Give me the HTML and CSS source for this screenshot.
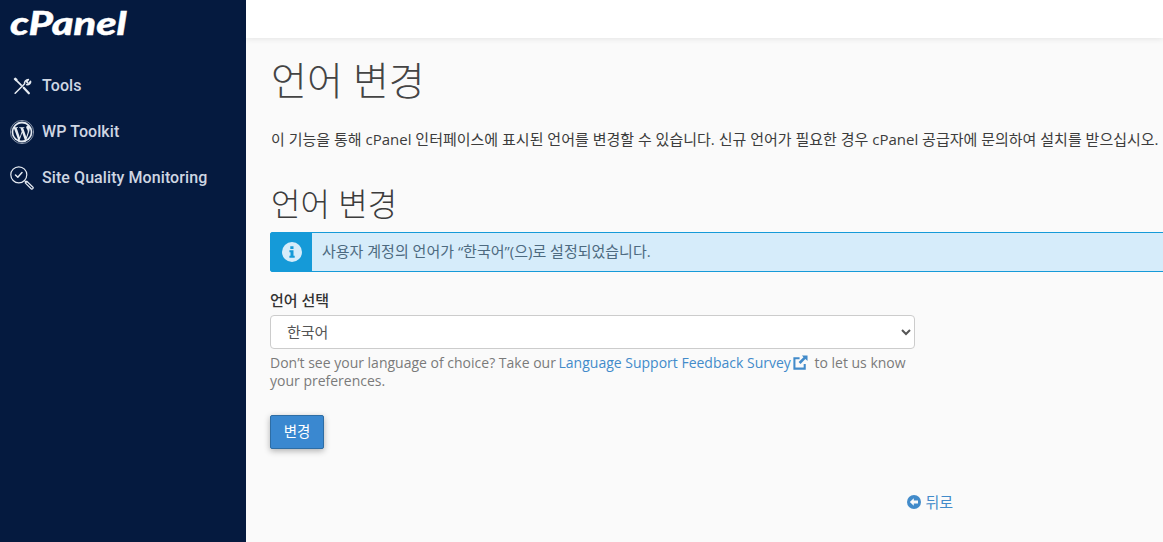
FILE: index.html
```html
<!DOCTYPE html>
<html lang="ko">
<head>
<meta charset="utf-8">
<title>언어 변경</title>
<link rel="stylesheet" href="styles.css">
</head>
<body>
<div class="app">
  <aside class="sidebar">
    <div class="logo"><span class="logo-text">cPanel</span></div>
    <nav class="nav">
      <a class="nav-item">
        <svg class="nav-icon" viewBox="-2 -2 28 28" fill="none" stroke="#e6ebf2" stroke-width="1.700" stroke-linecap="round" stroke-linejoin="round"><path d="M4.500 4.500 L11 11" stroke-width="2"/><path d="M3.200 3.800 L4.200 3 L6 4.500 L5 5.500 Z"/><path d="M14 14 L20 20.500" stroke-width="2.600"/><path d="M4 20.500 L14.500 10 M15 9.500 C14.500 7.500 16.500 4.500 19.500 4.500 L17.500 7 L18.500 8.500 L20.500 8.800 L22 6.500 C22.500 9 20 11 17.500 10.500" stroke-width="1.800"/></svg>
        <span>Tools</span>
      </a>
      <a class="nav-item">
        <svg class="nav-icon" viewBox="0 0 24 24"><circle cx="12" cy="12" r="11.600" fill="none" stroke="#aab4c4" stroke-width="0.800"/><circle cx="12" cy="12" r="10.400" fill="#e6ebf2"/><path fill="#051a3f" d="M3.300 12 C3.300 15.400 5.300 18.400 8.200 19.800 L4 8.400 C3.500 9.500 3.300 10.700 3.300 12 Z M17.800 11.600 C17.800 10.500 17.400 9.800 17.100 9.200 C16.600 8.500 16.200 7.900 16.200 7.200 C16.200 6.400 16.800 5.700 17.600 5.700 L17.800 5.700 C16.200 4.300 14.200 3.400 12 3.400 C9 3.400 6.300 4.900 4.800 7.300 L5.300 7.300 C6.200 7.300 7.600 7.200 7.600 7.200 C8.100 7.200 8.100 7.900 7.700 7.900 C7.700 7.900 7.200 8 6.700 8 L9.800 17.200 L11.700 11.600 L10.400 8 C9.900 8 9.500 7.900 9.500 7.900 C9 7.900 9.100 7.200 9.500 7.200 C9.500 7.200 10.900 7.300 11.800 7.300 C12.700 7.300 14.100 7.200 14.100 7.200 C14.600 7.200 14.600 7.900 14.200 7.900 C14.200 7.900 13.700 8 13.200 8 L16.300 17.100 L17.100 14.300 C17.500 13.200 17.800 12.300 17.800 11.600 Z M12.200 12.800 L9.600 20.300 C10.400 20.500 11.200 20.600 12 20.600 C13 20.600 14 20.400 14.900 20.100 L14.800 20 Z M19.600 7.900 C19.700 8.200 19.700 8.500 19.700 8.800 C19.700 9.700 19.500 10.700 19.100 11.900 L16.500 19.400 C19 17.900 20.700 15.200 20.700 12 C20.700 10.500 20.300 9.100 19.600 7.900 Z"/></svg>
        <span>WP Toolkit</span>
      </a>
      <a class="nav-item">
        <svg class="nav-icon" viewBox="0 0 24 24" fill="none" stroke="#e6ebf2" stroke-width="1.200" stroke-linecap="round" stroke-linejoin="round"><circle cx="8.800" cy="8.800" r="8"/><path d="M5.500 9 L7.800 11.200 L12 6.600" stroke-width="1.500"/><path d="M14.800 14.800 L16.200 16.200"/><path d="M16.800 15.200 L23 21.300 C23.700 22 22.300 23.700 21.400 23 L15.200 16.800 Z"/></svg>
        <span>Site Quality Monitoring</span>
      </a>
    </nav>
  </aside>
  <div class="main">
    <header class="topbar"></header>
    <main class="content">
      <h1 class="page-title">언어 변경</h1>
      <p class="intro">이 기능을 통해 cPanel 인터페이스에 표시된 언어를 변경할 수 있습니다. 신규 언어가 필요한 경우 cPanel 공급자에 문의하여 설치를 받으십시오.</p>
      <h2 class="section-title">언어 변경</h2>
      <div class="alert">
        <div class="alert-icon">
          <svg viewBox="0 0 20 20" width="20" height="20"><circle cx="10" cy="10" r="10" fill="#d6ecfa"/><path fill="#159ad8" d="M8.300 4.300h3.200v2.800H8.300z M7.400 8.300h4.100v5.400h1.200v2H7.400v-2h1.100v-3.400H7.400z"/></svg>
        </div>
        <div class="alert-body">사용자 계정의 언어가 “한국어”(으)로 설정되었습니다.</div>
      </div>
      <form class="form">
        <label class="label" for="lang">언어 선택</label>
        <select class="select" id="lang">
          <option>한국어</option>
        </select>
        <p class="help">Don’t see your language of choice? Take our <a class="link">Language Support Feedback Survey<svg class="ext" viewBox="0 0 16 16" width="15" height="15"><path fill="none" stroke="#428bca" stroke-width="2.200" d="M12.500 9.500V14.500H1.500V3.500h5.500"/><path fill="#428bca" d="M9.500 0.500H15.500V6.500L13.200 4.300 8 9.500 6 7.500 11.200 2.300Z"/></svg></a> to let us know your preferences.</p>
        <button class="btn" type="button">변경</button>
      </form>
      <div class="back-row">
        <a class="back">
          <svg viewBox="0 0 14 14" width="14" height="14"><circle cx="7" cy="7" r="7" fill="#428bca"/><path fill="#fafafa" d="M2.800 7 L6.800 3.200 V5.500 H11 V8.500 H6.800 V10.800 Z"/></svg>
          <span>뒤로</span>
        </a>
      </div>
    </main>
  </div>
</div>
</body>
</html>
```
FILE: styles.css
```css
* { box-sizing: border-box; }
html, body { margin: 0; height: 100%; overflow: hidden; }
body {
  font-family: "Open Sans", "Noto Sans CJK KR", sans-serif;
  font-size: 14px;
  line-height: 20px;
  color: #333;
  background: #fafafa;
}
.app { display: flex; width: 1163px; height: 542px; overflow: hidden; }
.sidebar {
  flex: 0 0 246px;
  background: #051a3f;
  color: #e6ebf2;
}
.logo {
  height: 63px;
  padding-left: 10px;
  font-family: "Lato", sans-serif;
  font-weight: 900;
  font-style: italic;
  font-size: 33px;
  line-height: 44px;
  color: #fff;
}
.logo-text {
  display: inline-block;
  transform-origin: 0 50%;
  transform: scaleX(1.26);
  -webkit-text-stroke: 0.4px #fff;
}
.nav { display: flex; flex-direction: column; }
.nav-item {
  display: flex;
  align-items: center;
  height: 46px;
  padding-left: 10px;
  gap: 8px;
  font-family: "Roboto", sans-serif;
  font-size: 16px;
  font-weight: 500;
  letter-spacing: 0.08px;
  color: #cfd6e2;
}
.nav-icon { width: 24px; height: 24px; flex: none; }
.main { flex: 1; min-width: 0; display: flex; flex-direction: column; }
.topbar {
  height: 38px;
  background: #fff;
  box-shadow: 0 1px 6px rgba(0,0,0,.09);
  flex: none;
}
.content { padding: 0 0 0 25px; flex: 1; }
.page-title {
  margin: 20px 0 0;
  font-size: 39px;
  line-height: 44px;
  font-weight: 300;
  color: #444;
  white-space: nowrap;
}
.intro {
  margin: 27px 0 0;
  white-space: nowrap;
  font-size: 15px;
  line-height: 20px;
  color: #3c3c3c;
}
.section-title {
  margin: 36px 0 0;
  font-size: 32px;
  line-height: 38px;
  font-weight: 300;
  color: #3c3c3c;
  white-space: nowrap;
}
.alert {
  display: flex;
  height: 40px;
  margin: 9px 0 0 -1px;
  width: 900px;
  border: 1px solid #159ad8;
  border-radius: 2px 0 0 2px;
  background: #d6ecfa;
}
.alert-icon {
  flex: 0 0 41px;
  background: #159ad8;
  display: flex;
  align-items: center;
  justify-content: center;
}
.alert-body {
  padding-left: 10px;
  font-size: 15px;
  line-height: 37px;
  color: #4d6a80;
  white-space: nowrap;
}
.form { width: 645px; margin-left: -1px; }
.label {
  display: block;
  margin-top: 18px;
  font-size: 15px;
  font-weight: 500;
  color: #333;
  line-height: 20px;
}
.select {
  display: block;
  width: 100%;
  height: 34px;
  margin-top: 5px;
  padding: 0 12px;
  font-family: inherit;
  font-size: 15px;
  color: #555;
  background: #fff;
  border: 1px solid #ccc;
  border-radius: 4px;
}
.help {
  margin: 5px 0 0;
  color: #7a7a7a;
  line-height: 18px;
  font-size: 14px;
}
.link { color: #428bca; margin-left: -1px; }
.ext { vertical-align: -2px; margin-left: 2px; margin-right: 3px; }
.btn {
  display: block;
  margin-top: 25px;
  width: 54px;
  height: 34px;
  padding: 0 0 3px;
  font-family: inherit;
  font-size: 14.500px;
  color: #fff;
  background: #3a88d0;
  border: 1px solid #2e6da4;
  border-radius: 2px;
  box-shadow: 0 2px 6px rgba(0,0,0,.3);
}
.back-row {
  display: flex;
  justify-content: flex-end;
  width: 682px;
  margin-top: 43px;
}
.back { display: flex; align-items: center; gap: 4px; font-size: 15px; color: #428bca; }
```
